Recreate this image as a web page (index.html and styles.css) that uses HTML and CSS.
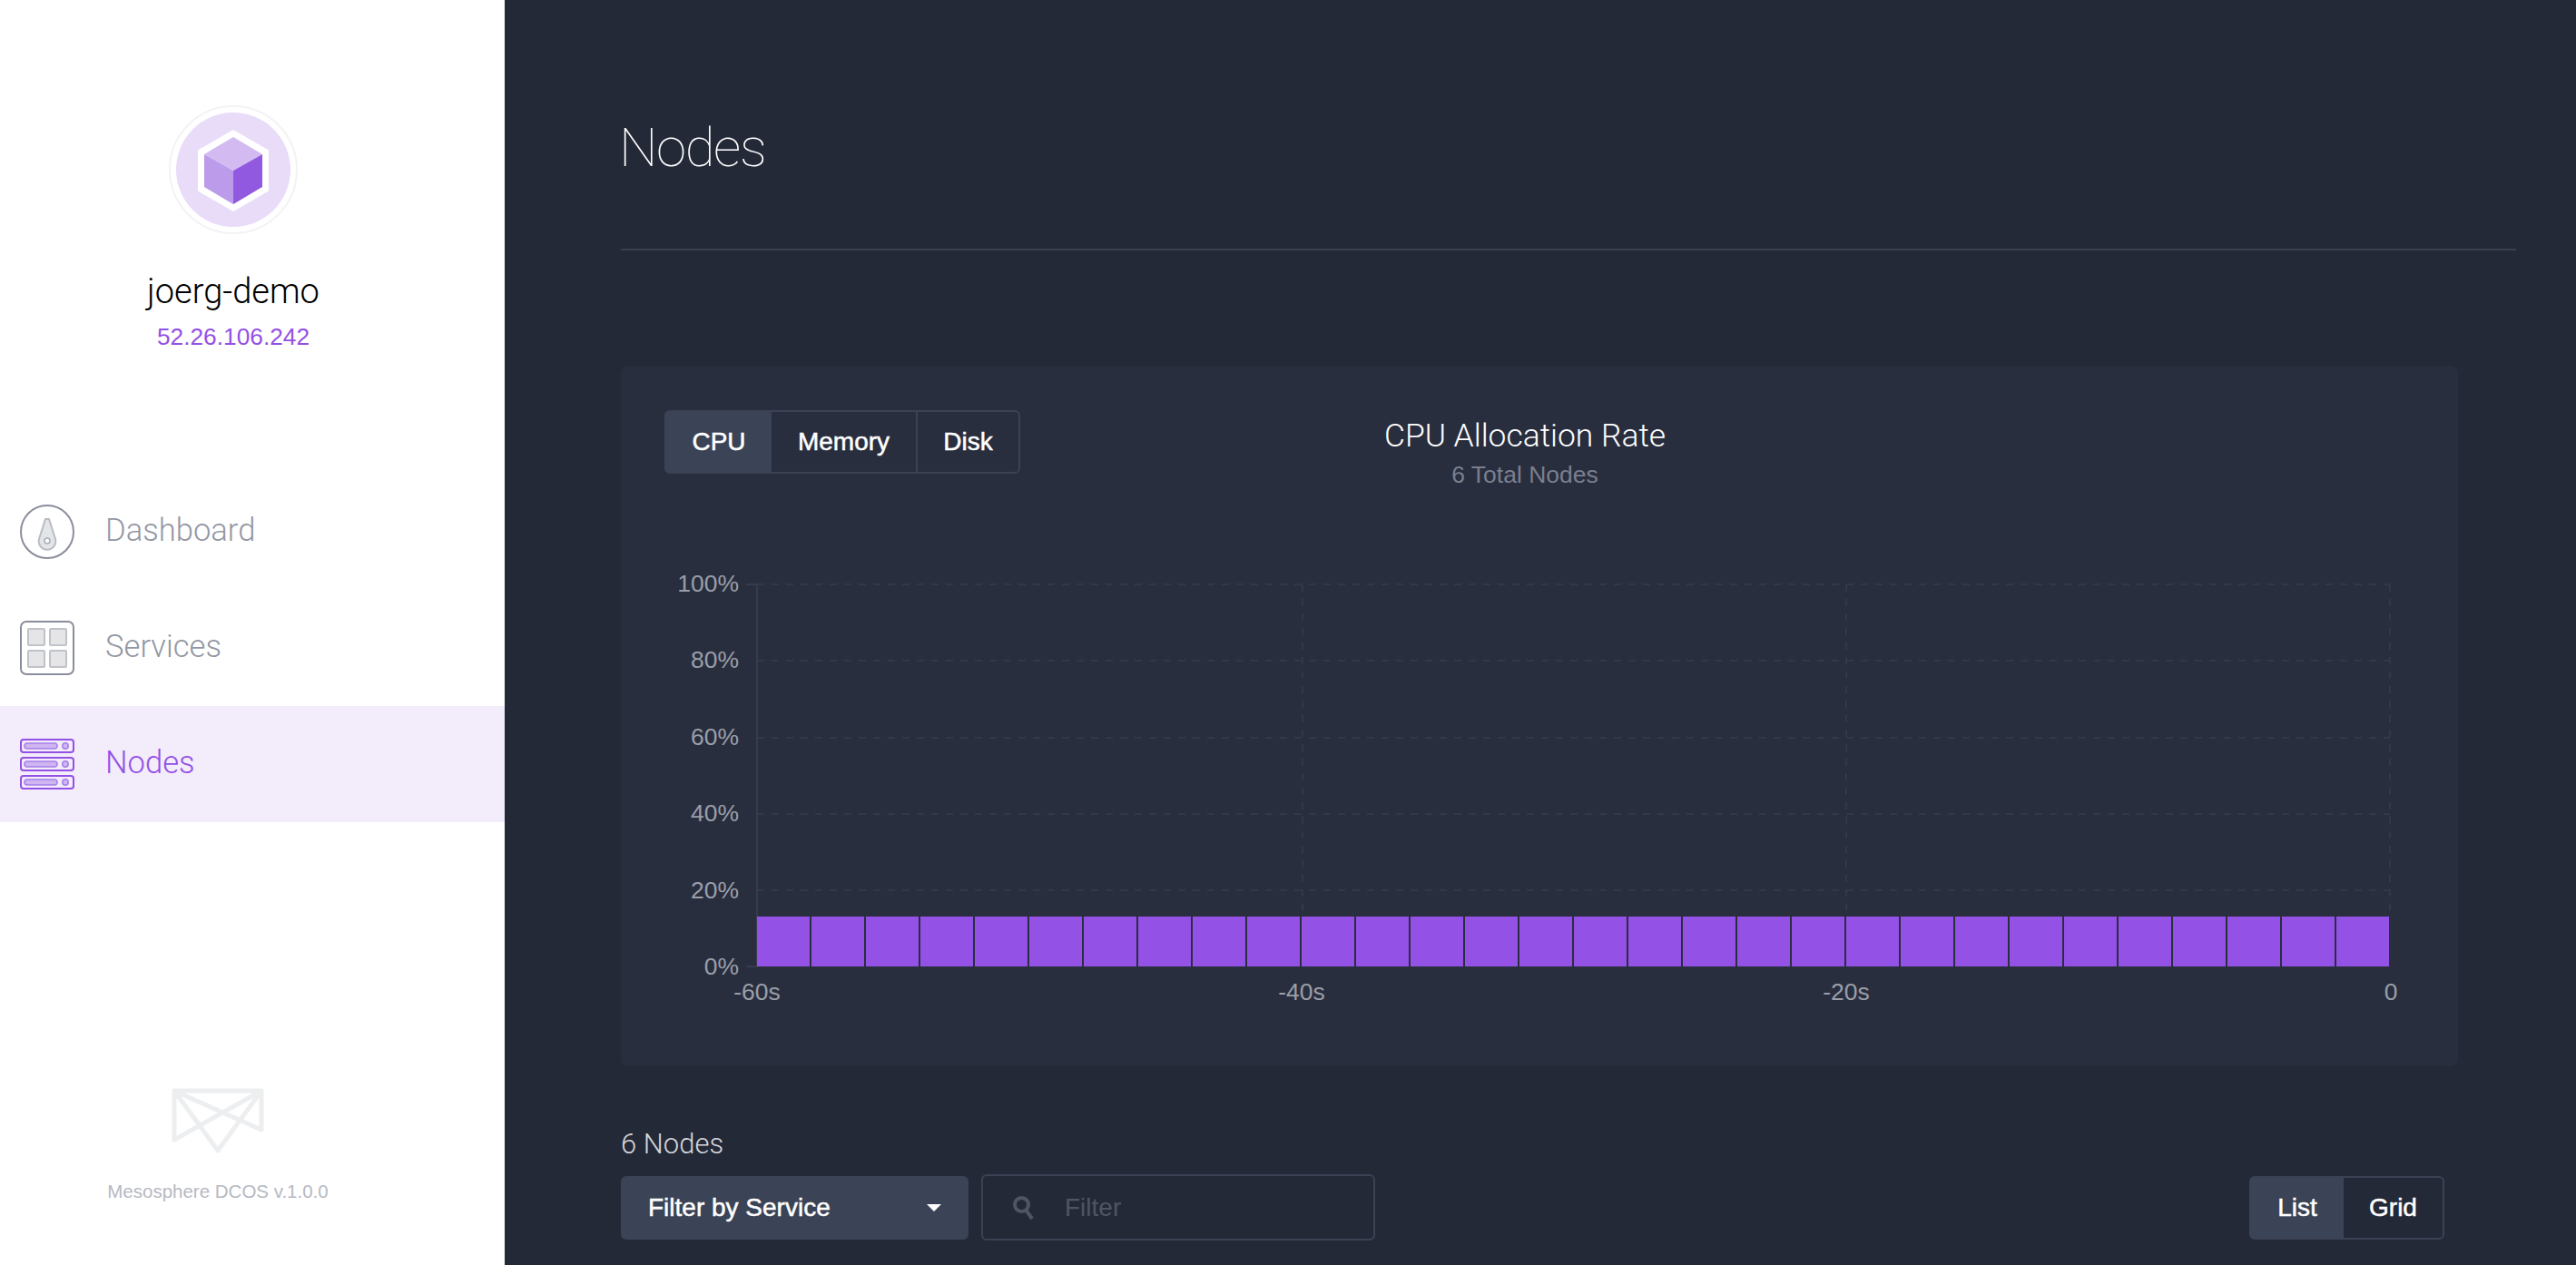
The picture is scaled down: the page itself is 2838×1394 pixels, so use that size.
FILE: index.html
```html
<!DOCTYPE html>
<html lang="en">
<head>
    <meta charset="UTF-8">
    <title>Nodes</title>
    <link rel="stylesheet" href="styles.css">
</head>
<body>
    <aside class="sidebar">
        <div class="cluster">
            <svg class="cluster-logo" width="142" height="142" viewBox="0 0 142 142">
                <circle cx="71" cy="71" r="70" fill="#fff" stroke="#f3f3f4" stroke-width="2"/>
                <circle cx="71" cy="71" r="63" fill="#e8dcf9"/>
                <polygon points="71,27 110,49.5 110,94.5 71,117 32,94.5 32,49.5" fill="#fff"/>
                <polygon points="71,35 103,54 71,72 39,54" fill="#d3bbf1"/>
                <polygon points="39,54 71,72 71,109 39,90" fill="#bb9bea"/>
                <polygon points="103,54 71,72 71,109 103,90" fill="#9159e0"/>
            </svg>
            <div class="cluster-name">joerg-demo</div>
            <div class="cluster-ip">52.26.106.242</div>
        </div>

        <nav class="nav">
            <a class="nav-item">
                <svg class="nav-icon" width="60" height="60" viewBox="0 0 60 60">
                    <circle cx="30" cy="30" r="29" fill="none" stroke="#8a8e9c" stroke-width="2"/>
                    <path d="M28 16h4l7 22a9.3 9.3 0 1 1-18 0z" fill="#e4e5e8" stroke="#b9bcc5" stroke-width="2"/>
                    <circle cx="30" cy="40" r="3" fill="#fff" stroke="#a9acb7" stroke-width="1.5"/>
                </svg>
                <span class="nav-label">Dashboard</span>
            </a>
            <a class="nav-item">
                <svg class="nav-icon" width="60" height="60" viewBox="0 0 60 60">
                    <rect x="1" y="1" width="58" height="58" rx="6" fill="none" stroke="#8a8e9c" stroke-width="2"/>
                    <g fill="#e5e5e8" stroke="#c0c2ca" stroke-width="2">
                        <rect x="9" y="9" width="18" height="18" rx="1"/>
                        <rect x="33" y="9" width="18" height="18" rx="1"/>
                        <rect x="9" y="33" width="18" height="18" rx="1"/>
                        <rect x="33" y="33" width="18" height="18" rx="1"/>
                    </g>
                </svg>
                <span class="nav-label">Services</span>
            </a>
            <a class="nav-item active">
                <svg class="nav-icon" width="60" height="60" viewBox="0 0 60 60">
                    <g fill="none" stroke="#9351e5" stroke-width="2">
                        <rect x="1" y="3" width="58" height="14" rx="3"/>
                        <rect x="1" y="23" width="58" height="14" rx="3"/>
                        <rect x="1" y="43" width="58" height="14" rx="3"/>
                    </g>
                    <g fill="#cfb5f2" stroke="#a77fe9" stroke-width="1.5">
                        <rect x="5" y="7" width="36" height="6" rx="3"/>
                        <rect x="5" y="27" width="36" height="6" rx="3"/>
                        <rect x="5" y="47" width="36" height="6" rx="3"/>
                        <circle cx="50" cy="10" r="3.2"/>
                        <circle cx="50" cy="30" r="3.2"/>
                        <circle cx="50" cy="50" r="3.2"/>
                    </g>
                </svg>
                <span class="nav-label">Nodes</span>
            </a>
        </nav>

        <div class="sidebar-foot">
            <svg class="foot-logo" width="104" height="74" viewBox="0 0 104 74">
                <path d="M4 4H100M4 4V58M100 4V47M4 4L100 47M100 4L4 58M4 4L52 70L100 4" fill="none" stroke="#eceef0" stroke-width="5" stroke-linejoin="round" stroke-linecap="round"/>
            </svg>
            <div class="version">Mesosphere DCOS v.1.0.0</div>
        </div>
    </aside>

    <main class="main">
        <header class="page-header">
            <h1>Nodes</h1>
        </header>

        <section class="chart-panel">
            <div class="chart-top">
                <div class="btn-group">
                    <button class="btn active tab-cpu">CPU</button>
                    <button class="btn tab-memory">Memory</button>
                    <button class="btn tab-disk">Disk</button>
                </div>
                <div class="chart-heading">
                    <div class="chart-title">CPU Allocation Rate</div>
                    <div class="chart-sub">6 Total Nodes</div>
                </div>
            </div>
            <svg class="chart" width="1928" height="500" viewBox="732 620 1928 500">
                <g class="grid">
                    <line x1="834" y1="644" x2="2633" y2="644"/>
                    <line x1="834" y1="728" x2="2633" y2="728"/>
                    <line x1="834" y1="813" x2="2633" y2="813"/>
                    <line x1="834" y1="897" x2="2633" y2="897"/>
                    <line x1="834" y1="981" x2="2633" y2="981"/>
                    <line x1="1435" y1="644" x2="1435" y2="1010"/>
                    <line x1="2034" y1="644" x2="2034" y2="1010"/>
                    <line x1="2633" y1="644" x2="2633" y2="1010"/>
                </g>
                <path class="axis" d="M822 644H834V1065H822"/>
                <g class="bars">
                    <rect x="834" y="1010" width="58" height="55"/>
                    <rect x="894" y="1010" width="58" height="55"/>
                    <rect x="954" y="1010" width="58" height="55"/>
                    <rect x="1014" y="1010" width="58" height="55"/>
                    <rect x="1074" y="1010" width="58" height="55"/>
                    <rect x="1134" y="1010" width="58" height="55"/>
                    <rect x="1194" y="1010" width="58" height="55"/>
                    <rect x="1254" y="1010" width="58" height="55"/>
                    <rect x="1314" y="1010" width="58" height="55"/>
                    <rect x="1374" y="1010" width="58" height="55"/>
                    <rect x="1434" y="1010" width="58" height="55"/>
                    <rect x="1494" y="1010" width="58" height="55"/>
                    <rect x="1554" y="1010" width="58" height="55"/>
                    <rect x="1614" y="1010" width="58" height="55"/>
                    <rect x="1674" y="1010" width="58" height="55"/>
                    <rect x="1734" y="1010" width="58" height="55"/>
                    <rect x="1794" y="1010" width="58" height="55"/>
                    <rect x="1854" y="1010" width="58" height="55"/>
                    <rect x="1914" y="1010" width="58" height="55"/>
                    <rect x="1974" y="1010" width="58" height="55"/>
                    <rect x="2034" y="1010" width="58" height="55"/>
                    <rect x="2094" y="1010" width="58" height="55"/>
                    <rect x="2154" y="1010" width="58" height="55"/>
                    <rect x="2214" y="1010" width="58" height="55"/>
                    <rect x="2274" y="1010" width="58" height="55"/>
                    <rect x="2334" y="1010" width="58" height="55"/>
                    <rect x="2394" y="1010" width="58" height="55"/>
                    <rect x="2454" y="1010" width="58" height="55"/>
                    <rect x="2514" y="1010" width="58" height="55"/>
                    <rect x="2574" y="1010" width="58" height="55"/>
                </g>
                <g class="labels y-labels">
                    <text x="814" y="652">100%</text>
                    <text x="814" y="736">80%</text>
                    <text x="814" y="821">60%</text>
                    <text x="814" y="905">40%</text>
                    <text x="814" y="990">20%</text>
                    <text x="814" y="1074">0%</text>
                </g>
                <g class="labels x-labels">
                    <text x="834" y="1102">-60s</text>
                    <text x="1434" y="1102">-40s</text>
                    <text x="2034" y="1102">-20s</text>
                    <text x="2634" y="1102">0</text>
                </g>
            </svg>
        </section>

        <section class="list-head">
            <div class="node-count">6 Nodes</div>
            <div class="controls">
                <button class="dropdown">
                    Filter by Service
                    <span class="caret"></span>
                </button>
                <div class="filter">
                    <svg class="search-icon" width="26" height="28" viewBox="0 0 26 28">
                        <circle cx="10.5" cy="10.5" r="7.5" fill="none" stroke="#4f5564" stroke-width="4"/>
                        <path d="M15 16l7 10" fill="none" stroke="#4f5564" stroke-width="4"/>
                    </svg>
                    <span class="filter-text">Filter</span>
                </div>
                <div class="btn-group view-toggle">
                    <button class="btn active tab-list">List</button>
                    <button class="btn tab-grid">Grid</button>
                </div>
            </div>
        </section>
    </main>
</body>
</html>
```

FILE: styles.css
```css
html, body {
    height: 100%;
}

body {
    margin: 0;
    display: flex;
    overflow: hidden;
    font-family: "Liberation Sans", Arial, sans-serif;
    background-color: #242937;
    color: #fff;
}

/* sidebar */
.sidebar {
    width: 556px;
    flex-shrink: 0;
    display: flex;
    flex-direction: column;
    background-color: #fff;
}

.cluster {
    padding: 116px 42px 0 0;
    text-align: center;
}

.cluster-logo {
    display: block;
    margin: 0 auto;
}

.cluster-name {
    margin-top: 41px;
    font-family: Roboto, "Liberation Sans", sans-serif;
    font-weight: 300;
    font-size: 38px;
    line-height: 44px;
    color: #000;
}

.cluster-ip {
    margin-top: 13px;
    font-size: 26.3px;
    line-height: 30px;
    color: #9351e5;
}

.nav {
    margin-top: 136px;
}

.nav-item {
    height: 128px;
    display: flex;
    align-items: center;
    gap: 34px;
    padding-left: 22px;
    font-family: Roboto, "Liberation Sans", sans-serif;
    font-weight: 300;
    font-size: 34.6px;
    color: #9397a4;
}

.nav-label {
    margin-bottom: 4px;
}

.nav-item.active {
    background-color: #f3ecfb;
    color: #9351e5;
}

.sidebar-foot {
    margin-top: auto;
    padding: 0 76px 68px 0;
    text-align: center;
}

.foot-logo {
    display: block;
    margin: 0 auto 28px;
}

.version {
    font-size: 20.5px;
    line-height: 26px;
    color: #b5b9c2;
}

/* main */
.main {
    flex: 1;
    padding-left: 128px;
}

.page-header {
    margin-right: 66px;
    padding-top: 128px;
    height: 146px;
    border-bottom: 2px solid #3a4052;
}

h1 {
    margin: 0 0 0 -2px;
    font-family: Roboto, "Liberation Sans", sans-serif;
    font-weight: 100;
    font-size: 60px;
    line-height: 70px;
    letter-spacing: -1.4px;
}

.chart-panel {
    margin: 127px 130px 0 0;
    height: 772px;
    box-sizing: border-box;
    padding: 49px 48px 0;
    background-color: #292e3e;
    border-radius: 8px;
}

.chart-top {
    display: flex;
    height: 70px;
}

.chart-heading {
    width: 1112px;
    text-align: center;
}

.chart-title {
    font-family: Roboto, "Liberation Sans", sans-serif;
    font-weight: 300;
    font-size: 35.4px;
    line-height: 42px;
    margin-top: 7px;
}

.chart-sub {
    font-size: 26.5px;
    line-height: 30px;
    margin-top: 7px;
    color: #7a7f8e;
}

.chart {
    display: block;
    margin-top: 98px;
}

.grid line {
    stroke: #363c4e;
    stroke-width: 1.5;
    stroke-dasharray: 8 8;
}

.axis {
    fill: none;
    stroke: #363c4e;
    stroke-width: 2;
}

.bars rect {
    fill: #9351e5;
}

.labels text {
    font-size: 26.5px;
    fill: #9a9ea9;
}

.y-labels text {
    text-anchor: end;
}

.x-labels text {
    text-anchor: middle;
}

/* button groups */
.btn-group {
    display: flex;
    flex-shrink: 0;
    height: 70px;
    box-sizing: border-box;
    border: 2px solid #3b4254;
    border-radius: 6px;
}

.btn {
    padding: 0;
    border: none;
    background: none;
    color: #fff;
    font-family: "Liberation Sans", Arial, sans-serif;
    font-size: 28px;
    -webkit-text-stroke: 0.5px #fff;
}

.btn.active {
    background-color: #3b4356;
}

.tab-cpu {
    width: 116px;
}

.tab-memory {
    width: 161px;
    border-right: 2px solid #3b4254;
}

.tab-disk {
    width: 111px;
}

.list-head {
    margin-top: 68px;
}

.node-count {
    font-family: Roboto, "Liberation Sans", sans-serif;
    font-weight: 300;
    font-size: 31px;
    line-height: 36px;
    color: #d5d7dc;
}

.controls {
    display: flex;
    align-items: center;
    margin-top: 15px;
}

.dropdown {
    width: 383px;
    height: 70px;
    display: flex;
    align-items: center;
    justify-content: space-between;
    padding: 0 30px;
    border: none;
    border-radius: 6px;
    background-color: #3b4356;
    color: #fff;
    font-family: "Liberation Sans", Arial, sans-serif;
    font-size: 28px;
    -webkit-text-stroke: 0.5px #fff;
}

.caret {
    border-left: 8px solid transparent;
    border-right: 8px solid transparent;
    border-top: 8px solid #fff;
}

.filter {
    width: 434px;
    height: 73px;
    box-sizing: border-box;
    display: flex;
    align-items: center;
    margin-left: 14px;
    padding-left: 32px;
    border: 2px solid #3b4254;
    border-radius: 6px;
}

.filter-text {
    margin-left: 32px;
    font-size: 28px;
    color: #4f5564;
}

.view-toggle {
    margin-left: 963px;
}

.tab-list {
    width: 102px;
}

.tab-grid {
    width: 109px;
}
```
